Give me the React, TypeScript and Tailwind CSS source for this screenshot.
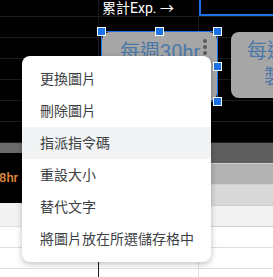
import React from 'react';

const menuItems = ['更換圖片', '刪除圖片', '指派指令碼', '重設大小', '替代文字', '將圖片放在所選儲存格中'];

// rows under the header row, 21px each
const darkRows = [0, 1, 2, 3, 4, 5];
const bands = ['bg-[#5f5f5f]', 'bg-[#b3b3b3]', 'bg-[#d9d9d9]', 'bg-[#f3f3f3]'];
const whiteRows = [0, 1, 2];

const Handle = ({ className }: { className: string }) => (
  <div className={`absolute w-[9px] h-[9px] bg-[#1a73e8] border border-white ${className}`} />
);

const App: React.FC = () => {
  return (
    <div
      className="relative w-[273px] h-[277px] overflow-hidden bg-black"
      style={{ fontFamily: 'Roboto, "Noto Sans CJK TC", sans-serif' }}>
      {/* sheet grid */}
      <div className="flex">
        {/* column A */}
        <div className="w-[99px] flex flex-col border-r border-[#1c1c1c]">
          <div className="h-[17px] border-b border-[#1c1c1c]" />
          {darkRows.map((r) => (
            <div key={`a-dark-${r}`} className="h-[21px] border-b border-[#1c1c1c]" />
          ))}
          <div className="h-[10px] bg-[#6b6b6b]" />
          <div className="h-[50px] flex items-center">
            <span className="ml-[-1px] text-[13px] font-medium text-[#e0873a] whitespace-nowrap">8hr</span>
          </div>
          <div className="h-[24px] bg-[#f3f3f3] border-b border-[#e0e0e0]" />
          {whiteRows.map((r) => (
            <div key={`a-white-${r}`} className="h-[21px] bg-white border-b border-[#e0e0e0]" />
          ))}
        </div>

        {/* columns B and C */}
        <div className="flex-1 flex flex-col">
          <div className="h-[17px] flex border-b border-[#1c1c1c]">
            <div className="w-[100px] pl-[3px] text-[14px] leading-[17px] text-white whitespace-nowrap">累計Exp. →</div>
            <div className="flex-1 border-l-2 border-b-2 border-[#1a73e8]" />
          </div>
          {darkRows.map((r) => (
            <div key={`bc-dark-${r}`} className="h-[21px] flex border-b border-[#1c1c1c]">
              <div className="w-[100px] border-r border-[#1c1c1c]" />
            </div>
          ))}
          {bands.map((b, i) => (
            <div key={`band-${i}`} className={`h-[21px] border-b border-[#d0d0d0] ${b}`} />
          ))}
          {whiteRows.map((r) => (
            <div key={`bc-white-${r}`} className="h-[21px] flex bg-white border-b border-[#e0e0e0]">
              <div className="w-[100px] border-r border-[#e0e0e0]" />
            </div>
          ))}
        </div>
      </div>

      {/* second image on the sheet */}
      <div className="absolute left-[231px] top-[32px] w-[90px] h-[66px] rounded-[8px] bg-[#a6a6a6] overflow-hidden">
        <div className="pl-[16px] pt-[6px] text-[20px] leading-[26px] text-[#4c78a8] whitespace-nowrap">每週20hr</div>
        <div className="pl-[33px] text-[20px] leading-[26px] text-[#4c78a8] whitespace-nowrap">製作</div>
      </div>

      {/* selected image */}
      <div className="absolute left-[101px] top-[31px] w-[117px] h-[71px] border border-[#1a73e8]">
        <div className="relative w-full h-full rounded-[8px] bg-[#a6a6a6] overflow-hidden">
          <div className="pl-[18px] pt-[7px] text-[20px] leading-[26px] text-[#4c78a8] whitespace-nowrap">每週30hr</div>
          <div className="absolute right-[10px] top-[7px] flex flex-col gap-[2px]">
            <span className="w-[4px] h-[4px] rounded-full bg-[#5a5a5a]" />
            <span className="w-[4px] h-[4px] rounded-full bg-[#5a5a5a]" />
            <span className="w-[4px] h-[4px] rounded-full bg-[#5a5a5a]" />
          </div>
        </div>
        <Handle className="left-[-5px] top-[-5px]" />
        <Handle className="left-[53px] top-[-5px]" />
        <Handle className="right-[-5px] top-[-5px]" />
        <Handle className="right-[-5px] top-[30px]" />
        <Handle className="right-[-5px] bottom-[-5px]" />
      </div>

      {/* context menu */}
      <div className="absolute left-[22px] top-[56px] w-[189px] py-[7px] bg-white rounded-[8px] shadow-[0_2px_6px_rgba(0,0,0,0.25)]">
        {menuItems.map((item, index) => (
          <div
            key={`menu-${index}`}
            className={`h-[32px] pl-[18px] flex items-center text-[14px] text-[#3c4043] whitespace-nowrap ${
              index === 2 ? 'bg-[#f1f3f4]' : ''
            }`}>
            {item}
          </div>
        ))}
      </div>
    </div>
  );
};

export default App;
